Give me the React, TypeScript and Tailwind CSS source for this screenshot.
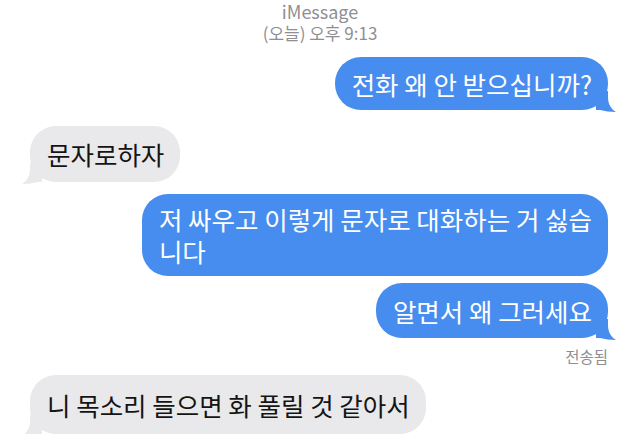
import type { ReactNode } from "react";

const font = { fontFamily: '"Noto Sans CJK KR", "Noto Sans", sans-serif' };

function Tail({ side, color }: { side: "left" | "right"; color: string }) {
  return (
    <svg
      viewBox="0 0 20 21"
      className={`absolute bottom-[-2px] w-[20px] h-[21px] ${side === "right" ? "right-[-8px]" : "left-[-8px] -scale-x-100"}`}
    >
      <path d="M0 0 L12 0 L12 6 C12 13 15 18 20 21 C14 21 9 20 4 19 L0 19 Z" fill={color} />
    </svg>
  );
}

function Sent({ children, tail, className = "" }: { children: ReactNode; tail?: boolean; className?: string }) {
  return (
    <div className={`self-end mr-[32px] relative ${className}`}>
      <div className="relative z-10 bg-[#478def] text-white rounded-[26px] pl-[17px] pr-[16px] text-[25.5px] leading-[32px]">
        {children}
      </div>
      {tail && <Tail side="right" color="#478def" />}
    </div>
  );
}

function Received({ children, className = "" }: { children: ReactNode; className?: string }) {
  return (
    <div className={`self-start ml-[30px] relative ${className}`}>
      <div className="relative z-10 bg-[#e9e9eb] text-[#141414] rounded-[26px] pl-[17px] pr-[16px] text-[25.5px] leading-[32px]">
        {children}
      </div>
      <Tail side="left" color="#e9e9eb" />
    </div>
  );
}

export default function App() {
  return (
    <div className="w-[640px] h-[434px] bg-white overflow-hidden flex flex-col" style={font}>
      {/* header */}
      <div className="flex flex-col items-center text-[#8e8e93]">
        <p className="text-[18px] leading-[22px]">iMessage</p>
        <p className="text-[17px] leading-[22px]">(오늘) 오후 9:13</p>
      </div>

      <Sent tail className="mt-[13px]">
        <div className="py-[10.5px]">전화 왜 안 받으십니까?</div>
      </Sent>

      <Received className="mt-[16px]">
        <div className="py-[12px]">문자로하자</div>
      </Received>

      <Sent className="mt-[12px]">
        <div className="py-[9px]">
          저 싸우고 이렇게 문자로 대화하는 거 싫습
          <br />
          니다
        </div>
      </Sent>

      <Sent tail className="mt-[7px]">
        <div className="py-[11.5px]">알면서 왜 그러세요</div>
      </Sent>

      <p className="self-end mr-[32px] mt-[8px] text-[15.5px] leading-[20px] text-[#8e8e93]">전송됨</p>

      <Received className="mt-[9px]">
        <div className="py-[13.5px]">니 목소리 들으면 화 풀릴 것 같아서</div>
      </Received>
    </div>
  );
}
